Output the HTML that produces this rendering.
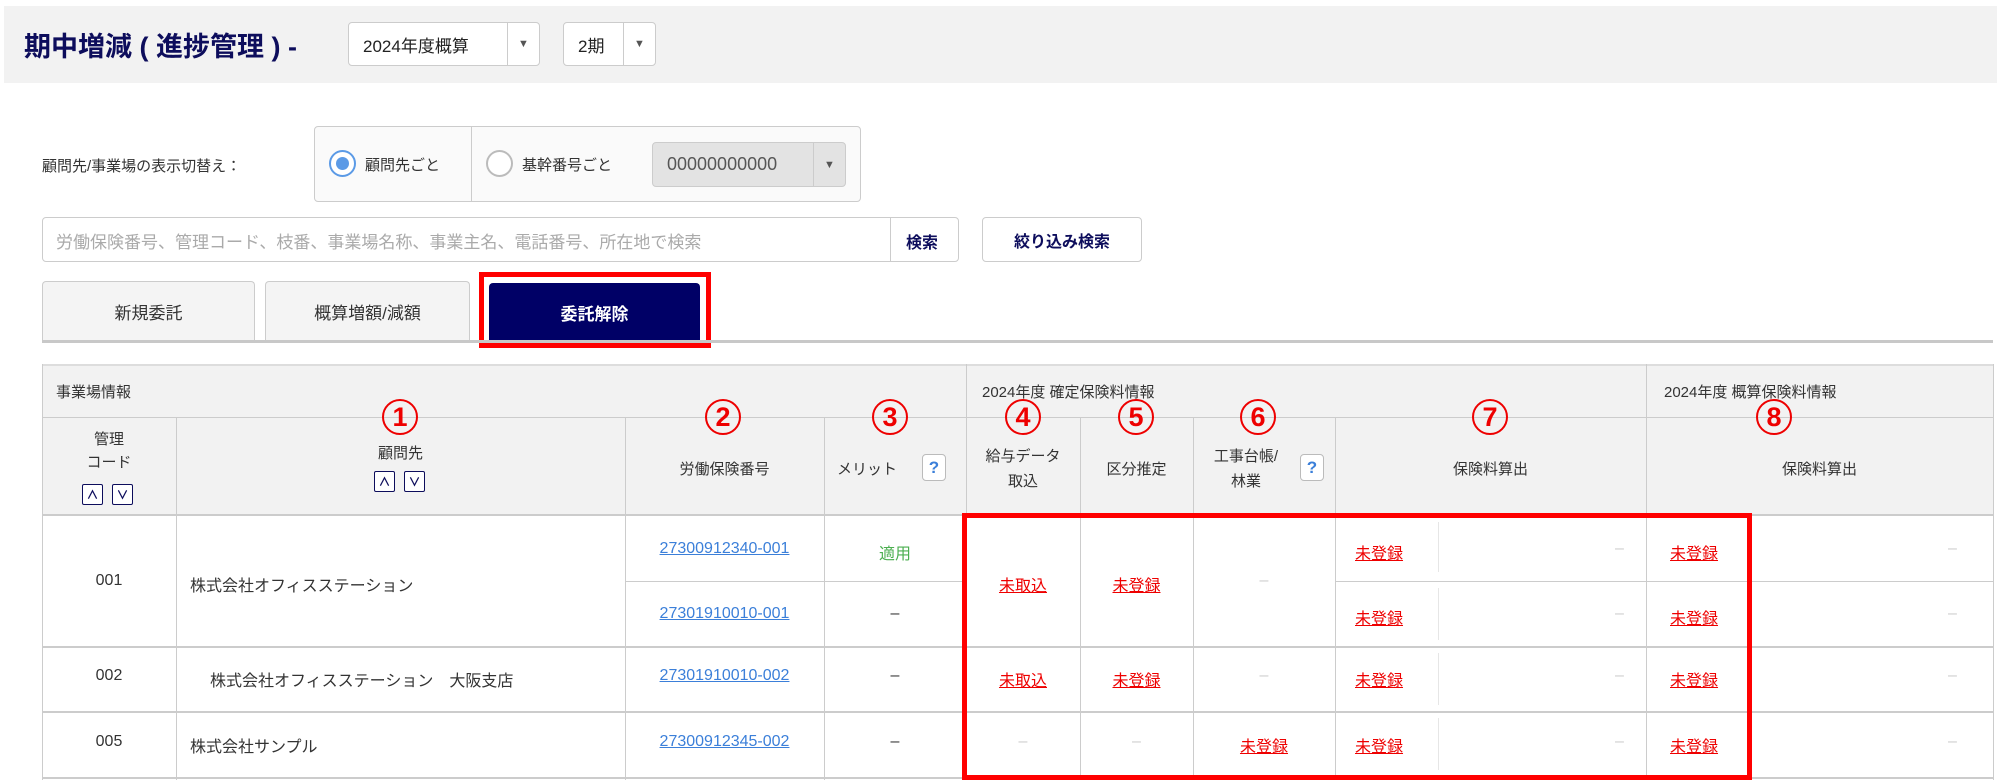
<!DOCTYPE html>
<html><head><meta charset="utf-8"><style>
*{box-sizing:border-box;margin:0;padding:0}
body{width:1997px;height:780px;background:#fff;font-family:"Liberation Sans","Noto Sans CJK JP",sans-serif;color:#333;position:relative;overflow:hidden;font-size:16px}
.a{position:absolute}
.hdr{left:4px;top:6px;width:1993px;height:77px;background:#f2f2f2}
.title{left:24px;top:25px;font-size:27px;font-weight:bold;color:#0d0d5c}
.sel{background:#fff;border:1px solid #ccc;border-radius:4px;height:44px;font-size:17px;color:#222;display:flex;align-items:center}
.sel .t{flex:1;padding-left:14px}
.sel .ar{width:32px;height:100%;border-left:1px solid #ccc;display:flex;align-items:center;justify-content:center;font-size:11px;color:#555}
.rb{border:1px solid #ccc;border-radius:4px;background:#fafafa}
.radio{width:27px;height:27px;border-radius:50%;border:2px solid #bbb;background:#fff}
.radio.on{border:2px solid #5b9ae6}
.radio.on::after{content:"";position:absolute;left:5px;top:5px;width:13px;height:13px;border-radius:50%;background:#5b9ae6}
.btn{background:#fff;border:1px solid #ccc;border-radius:4px;font-weight:bold;color:#0d0d5c;display:flex;align-items:center;justify-content:center;font-size:16px}
.tab{top:281px;height:60px;border:1px solid #ccc;border-bottom:none;border-radius:4px 4px 0 0;background:#f4f4f4;display:flex;align-items:center;justify-content:center;font-size:17px;color:#333}
.h{background:#f2f2f2}
.ln{background:#ccc}
.c{text-align:center}
.red{color:#e00;text-decoration:underline}
.lnk{color:#3b7fd9;text-decoration:underline}
.dash{color:#ccc}
.num{width:36px;height:36px;border:2px solid #e00;border-radius:50%;color:#e00;font-weight:bold;font-size:27px;display:flex;align-items:center;justify-content:center;background:transparent}
.q{width:24px;height:27px;border:1px solid #bbb;border-radius:4px;background:#fff;color:#3b7fd9;font-weight:bold;display:flex;align-items:center;justify-content:center;font-size:17px}
.sb{width:21px;height:21px;border:1.5px solid #0d0d5c;border-radius:2px;background:#fff;display:flex;align-items:center;justify-content:center;font-size:12px;color:#0d0d5c;font-weight:bold}
</style></head><body>
<div class="a hdr"></div>
<div class="a title">期中増減 ( 進捗管理 ) -</div>
<div class="a sel" style="left:348px;top:22px;width:192px"><span class="t">2024年度概算</span><span class="ar">▼</span></div>
<div class="a sel" style="left:563px;top:22px;width:93px"><span class="t">2期</span><span class="ar">▼</span></div>

<div class="a" style="left:42px;top:155px;font-size:15px;color:#333">顧問先/事業場の表示切替え：</div>
<div class="a rb" style="left:314px;top:126px;width:547px;height:76px"></div>
<div class="a ln" style="left:471px;top:127px;width:1px;height:74px"></div>
<div class="a radio on" style="left:329px;top:150px"></div>
<div class="a" style="left:365px;top:154px;font-size:15px">顧問先ごと</div>
<div class="a radio" style="left:486px;top:150px"></div>
<div class="a" style="left:522px;top:154px;font-size:15px">基幹番号ごと</div>
<div class="a sel" style="left:652px;top:142px;width:194px;height:45px;background:#e3e3e3;color:#555"><span class="t" style="font-size:18px">00000000000</span><span class="ar">▼</span></div>

<div class="a" style="left:42px;top:217px;width:917px;height:45px;border:1px solid #ccc;border-radius:4px;background:#fff"></div>
<div class="a" style="left:56px;top:228px;font-size:17px;color:#aaa">労働保険番号、管理コード、枝番、事業場名称、事業主名、電話番号、所在地で検索</div>
<div class="a ln" style="left:890px;top:218px;width:1px;height:43px"></div>
<div class="a" style="left:906px;top:229px;font-size:16px;font-weight:bold;color:#0d0d5c">検索</div>
<div class="a btn" style="left:982px;top:217px;width:160px;height:45px">絞り込み検索</div>

<div class="a tab" style="left:42px;width:213px">新規委託</div>
<div class="a tab" style="left:265px;width:205px">概算増額/減額</div>
<div class="a" style="left:479px;top:272px;width:232px;height:76px;border:5px solid #f00"></div>
<div class="a tab" style="left:489px;top:283px;width:211px;height:57px;background:#000066;border-color:#000066;color:#fff;font-weight:bold">委託解除</div>
<div class="a" style="left:42px;top:340px;width:1951px;height:3px;background:#c8c8c8"></div>

<!-- table -->
<div class="a h" style="left:42px;top:364px;width:1951px;height:151px;border-top:2px solid #ddd"></div>
<div class="a ln" style="left:42px;top:417px;width:1951px;height:1px"></div>
<div class="a" style="left:42px;top:514px;width:1951px;height:2px;background:#ccc"></div>
<div class="a ln" style="left:625px;top:581px;width:341px;height:1px"></div>
<div class="a ln" style="left:1335px;top:581px;width:658px;height:1px"></div>
<div class="a ln" style="left:42px;top:646px;width:1951px;height:2px"></div>
<div class="a ln" style="left:42px;top:711px;width:1951px;height:2px"></div>
<div class="a ln" style="left:42px;top:777px;width:1951px;height:2px"></div>
<div class="a ln" style="left:42px;top:364px;width:1px;height:416px"></div>
<div class="a ln" style="left:1993px;top:364px;width:1px;height:416px"></div>
<div class="a ln" style="left:176px;top:417px;width:1px;height:363px"></div>
<div class="a ln" style="left:625px;top:417px;width:1px;height:363px"></div>
<div class="a ln" style="left:824px;top:417px;width:1px;height:363px"></div>
<div class="a ln" style="left:966px;top:364px;width:1px;height:416px"></div>
<div class="a ln" style="left:1080px;top:417px;width:1px;height:363px"></div>
<div class="a ln" style="left:1193px;top:417px;width:1px;height:363px"></div>
<div class="a ln" style="left:1335px;top:417px;width:1px;height:363px"></div>
<div class="a ln" style="left:1646px;top:364px;width:1px;height:416px"></div>
<div class="a" style="left:1438px;top:522px;width:1px;height:50px;background:#e6e6e6"></div>
<div class="a" style="left:1438px;top:588px;width:1px;height:52px;background:#e6e6e6"></div>
<div class="a" style="left:1438px;top:653px;width:1px;height:52px;background:#e6e6e6"></div>
<div class="a" style="left:1438px;top:718px;width:1px;height:52px;background:#e6e6e6"></div>

<div class="a" style="left:56px;top:381px;font-size:15px">事業場情報</div>
<div class="a" style="left:982px;top:381px;font-size:15px">2024年度 確定保険料情報</div>
<div class="a" style="left:1664px;top:381px;font-size:15px">2024年度 概算保険料情報</div>

<div class="a c" style="left:42px;top:428px;width:134px;font-size:15px;line-height:23px">管理<br>コード</div>
<div class="a sb" style="left:82px;top:484px">∧</div><div class="a sb" style="left:112px;top:484px">∨</div>
<div class="a c" style="left:176px;top:442px;width:449px;font-size:15px">顧問先</div>
<div class="a sb" style="left:374px;top:471px">∧</div><div class="a sb" style="left:404px;top:471px">∨</div>
<div class="a c" style="left:625px;top:458px;width:199px;font-size:15px">労働保険番号</div>
<div class="a" style="left:837px;top:458px;font-size:15px">メリット</div>
<div class="a q" style="left:922px;top:454px">?</div>
<div class="a c" style="left:966px;top:444px;width:114px;font-size:15px;line-height:25px">給与データ<br>取込</div>
<div class="a c" style="left:1080px;top:458px;width:113px;font-size:15px">区分推定</div>
<div class="a c" style="left:1196px;top:444px;width:100px;font-size:15px;line-height:25px">工事台帳/<br>林業</div>
<div class="a q" style="left:1300px;top:454px">?</div>
<div class="a c" style="left:1335px;top:458px;width:311px;font-size:15px">保険料算出</div>
<div class="a c" style="left:1646px;top:458px;width:347px;font-size:15px">保険料算出</div>

<div class="a num" style="left:382px;top:399px">1</div>
<div class="a num" style="left:705px;top:399px">2</div>
<div class="a num" style="left:872px;top:399px">3</div>
<div class="a num" style="left:1005px;top:399px">4</div>
<div class="a num" style="left:1118px;top:399px">5</div>
<div class="a num" style="left:1240px;top:399px">6</div>
<div class="a num" style="left:1472px;top:399px">7</div>
<div class="a num" style="left:1756px;top:399px">8</div>

<!-- rows -->
<div class="a c" style="left:42px;top:572px;width:134px">001</div>
<div class="a" style="left:190px;top:572px">株式会社オフィスステーション</div>
<div class="a c lnk" style="left:625px;top:540px;width:199px">27300912340-001</div>
<div class="a c lnk" style="left:625px;top:605px;width:199px">27301910010-001</div>
<div class="a c" style="left:824px;top:540px;width:142px;color:#4caf50">適用</div>
<div class="a c" style="left:824px;top:605px;width:142px">–</div>
<div class="a c red" style="left:966px;top:572px;width:114px">未取込</div>
<div class="a c red" style="left:1080px;top:572px;width:113px">未登録</div>
<div class="a c dash" style="left:1193px;top:572px;width:142px">–</div>
<div class="a red" style="left:1355px;top:540px">未登録</div>
<div class="a red" style="left:1355px;top:605px">未登録</div>
<div class="a red" style="left:1670px;top:540px">未登録</div>
<div class="a red" style="left:1670px;top:605px">未登録</div>
<div class="a dash" style="left:1615px;top:540px">–</div><div class="a dash" style="left:1615px;top:605px">–</div>
<div class="a dash" style="left:1948px;top:540px">–</div><div class="a dash" style="left:1948px;top:605px">–</div>

<div class="a c" style="left:42px;top:667px;width:134px">002</div>
<div class="a" style="left:210px;top:667px">株式会社オフィスステーション　大阪支店</div>
<div class="a c lnk" style="left:625px;top:667px;width:199px">27301910010-002</div>
<div class="a c" style="left:824px;top:667px;width:142px">–</div>
<div class="a c red" style="left:966px;top:667px;width:114px">未取込</div>
<div class="a c red" style="left:1080px;top:667px;width:113px">未登録</div>
<div class="a c dash" style="left:1193px;top:667px;width:142px">–</div>
<div class="a red" style="left:1355px;top:667px">未登録</div>
<div class="a red" style="left:1670px;top:667px">未登録</div>
<div class="a dash" style="left:1615px;top:667px">–</div><div class="a dash" style="left:1948px;top:667px">–</div>

<div class="a c" style="left:42px;top:733px;width:134px">005</div>
<div class="a" style="left:190px;top:733px">株式会社サンプル</div>
<div class="a c lnk" style="left:625px;top:733px;width:199px">27300912345-002</div>
<div class="a c" style="left:824px;top:733px;width:142px">–</div>
<div class="a c dash" style="left:966px;top:733px;width:114px">–</div>
<div class="a c dash" style="left:1080px;top:733px;width:113px">–</div>
<div class="a c red" style="left:1193px;top:733px;width:142px">未登録</div>
<div class="a red" style="left:1355px;top:733px">未登録</div>
<div class="a red" style="left:1670px;top:733px">未登録</div>
<div class="a dash" style="left:1615px;top:733px">–</div><div class="a dash" style="left:1948px;top:733px">–</div>

<div class="a" style="left:962px;top:513px;width:790px;height:267px;border:5px solid #f00"></div>
</body></html>
